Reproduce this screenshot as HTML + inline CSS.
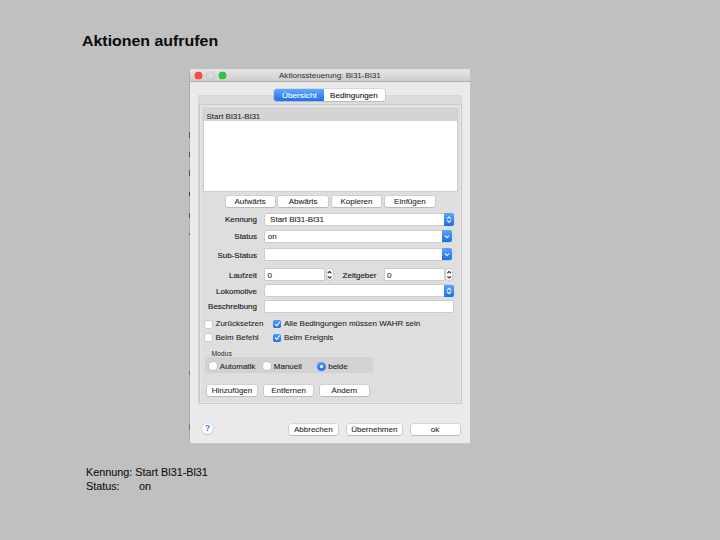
<!DOCTYPE html>
<html lang="de">
<head>
<meta charset="utf-8">
<title>Aktionen aufrufen</title>
<style>
html,body{margin:0;padding:0;}
body{width:720px;height:540px;background:#c0c0c0;overflow:hidden;position:relative;font-family:"Liberation Sans",sans-serif;color:#000;}
.abs{position:absolute;}
.t{position:absolute;white-space:nowrap;transform-origin:0 0;line-height:1;}
#title{left:82.2px;top:34.2px;font-weight:bold;font-size:14.6px;transform:scaleX(1.09);color:#0a0a0a;}
.cap{font-size:10.2px;transform:scaleX(1.06);color:#111;-webkit-text-stroke:0.1px currentColor;}
#win{left:190px;top:69px;width:280px;height:374.3px;background:#eaeaea;box-shadow:0 0.5px 0 0 #c9c9c9;border-radius:2px 2px 0 0;overflow:hidden;}
#tbar{left:0;top:0;width:100%;height:12.6px;background:linear-gradient(#e6e6e6,#cecece);border-bottom:0.7px solid #b0b0b0;box-sizing:border-box;}
.dot{position:absolute;width:7px;height:7px;border-radius:50%;top:3.2px;}
.d{font-size:8px;color:#1e1e1e;}
.lab{-webkit-text-stroke:0.16px currentColor;}
.d,.fld{-webkit-text-stroke:0.09px currentColor;}
.btn{-webkit-text-stroke:0.08px currentColor;}
.lab{position:absolute;white-space:nowrap;font-size:8px;line-height:1;color:#1e1e1e;text-align:right;width:80px;}
.btn{position:absolute;background:#fff;border-radius:2px;box-shadow:0 0 0 0.5px #c4c4c4,0 0.6px 0.6px 0.3px #b0b0b0;font-size:8px;line-height:11px;text-align:center;color:#1e1e1e;height:11px;}
.fld{position:absolute;background:#fff;box-shadow:0 0 0 0.5px #bababa;font-size:8px;line-height:12.4px;color:#1e1e1e;height:11.2px;white-space:nowrap;}
.cb{position:absolute;width:7px;height:7px;border-radius:1.5px;background:#fff;box-shadow:0 0 0 0.5px #b8b8b8;}
.cb.on{width:8px;height:8px;margin:-0.5px 0 0 -0.3px;background:linear-gradient(#4d9bf8,#1f73f0);box-shadow:none;border-radius:1.8px;}
.rd{position:absolute;width:7.6px;height:7.6px;border-radius:50%;background:#fff;box-shadow:0 0 0 0.5px #b4b4b4;}
.rd.on{background:linear-gradient(#4d9bf8,#1f73f0);box-shadow:0 0 0 0.5px #2a6fe0;}
.blue{position:absolute;background:linear-gradient(#5aa5fb,#1a6df0);border-radius:0 2px 2px 0;}
</style>
</head>
<body>
<div id="title" class="t">Aktionen aufrufen</div>

<div id="win" class="abs">
  <div id="tbar" class="abs"></div>
  <div class="dot" style="left:5.2px;background:#fc4a47;box-shadow:0 0 0 0.35px #e0352f;"></div>
  <div class="dot" style="left:16.9px;background:#dcdcdc;box-shadow:0 0 0 0.5px #bcbcbc;"></div>
  <div class="dot" style="left:28.8px;background:#2dc840;box-shadow:0 0 0 0.35px #22aa32;"></div>
  <div class="t d" style="left:89.4px;top:3px;color:#333;-webkit-text-stroke:0.05px;transform:scaleX(1.007)">Aktionssteuerung: Bl31-Bl31</div>
</div>

<!-- left edge artefacts -->
<div class="abs" style="left:189.2px;top:72px;width:0.7px;height:371px;background:#adadad;"></div>
<div class="abs" style="left:189.2px;top:132px;width:0.8px;height:6px;background:#555;"></div>
<div class="abs" style="left:189.2px;top:151.5px;width:0.8px;height:5.9px;background:#555;"></div>
<div class="abs" style="left:189.2px;top:169.7px;width:0.8px;height:5.9px;background:#555;"></div>
<div class="abs" style="left:189.2px;top:191.5px;width:0.8px;height:4.5px;background:#444;"></div>
<div class="abs" style="left:189.2px;top:213px;width:0.8px;height:5px;background:#555;"></div>
<div class="abs" style="left:189.2px;top:233px;width:0.8px;height:1.5px;background:#666;"></div>
<div class="abs" style="left:189.2px;top:371px;width:0.8px;height:4px;background:#777;"></div>
<div class="abs" style="left:189.2px;top:424px;width:0.8px;height:6px;background:#777;"></div>
<!-- tab pane -->
<div class="abs" style="left:198px;top:94.8px;width:264.4px;height:308.6px;background:#dcdcdc;border:0.5px solid #d6d6d6;box-sizing:border-box;"></div>
<div class="abs" style="left:199.2px;top:104.3px;width:262.6px;height:299.4px;background:#dedede;border:0.6px solid #cbcbcb;box-sizing:border-box;box-shadow:inset 0 0 0 0.8px #e7e7e7;"></div>

<!-- tabs -->
<div class="abs" style="left:274px;top:89px;width:111px;height:12.2px;background:#fff;border-radius:2.5px;box-shadow:0 0 0 0.5px #c6c6c6,0 0.6px 0.6px 0.3px #b0b0b0;"></div>
<div class="abs" style="left:274px;top:89px;width:50px;height:12.2px;background:linear-gradient(#5fa9fb,#1e70f1);border-radius:2.5px 0 0 2.5px;"></div>
<div class="t d" style="left:281.7px;top:91.6px;color:#fff;transform:scaleX(1.03)">Übersicht</div>
<div class="t d" style="left:330.3px;top:91.6px;color:#111;transform:scaleX(1.01)">Bedingungen</div>

<!-- list -->
<div class="abs" style="left:203.7px;top:108.8px;width:253px;height:82.3px;background:#fff;box-shadow:0 0 0 0.6px #c4c4c4;"></div>
<div class="abs" style="left:203.7px;top:108.8px;width:253px;height:11.9px;background:#d4d4d4;"></div>
<div class="t d" style="left:206.5px;top:112.6px;-webkit-text-stroke:0.06px">Start Bl31-Bl31</div>

<!-- list buttons -->
<div class="btn" style="left:225.6px;top:195.6px;width:49px;">Aufwärts</div>
<div class="btn" style="left:278.4px;top:195.6px;width:49.5px;">Abwärts</div>
<div class="btn" style="left:331.8px;top:195.6px;width:49.4px;">Kopieren</div>
<div class="btn" style="left:385.2px;top:195.6px;width:49.4px;">Einfügen</div>

<!-- form -->
<div class="lab" style="left:177px;top:216.2px;">Kennung</div>
<div class="fld" style="left:264.9px;top:213.95px;width:188.5px;border-radius:2px;"><span style="margin-left:5.2px">Start Bl31-Bl31</span></div>
<div class="blue" style="left:444px;top:213.4px;width:10.1px;height:12.2px;"></div>

<div class="lab" style="left:177px;top:233.4px;">Status</div>
<div class="fld" style="left:264.9px;top:230.7px;width:185px;"><span style="margin-left:2.8px">on</span></div>
<div class="blue" style="left:441.8px;top:230.1px;width:10.6px;height:12.2px;"></div>

<div class="lab" style="left:177px;top:251.6px;">Sub-Status</div>
<div class="fld" style="left:264.9px;top:248.6px;width:185px;"></div>
<div class="blue" style="left:441.8px;top:248.1px;width:10.6px;height:12.2px;"></div>

<div class="lab" style="left:177px;top:271.6px;">Laufzeit</div>
<div class="fld" style="left:265.4px;top:269.25px;width:58.8px;"><span style="margin-left:2.2px;position:relative;top:0.8px">0</span></div>
<div class="abs" style="left:326.5px;top:269.2px;width:6.2px;height:10.8px;margin:0.2px 0 0 0.1px;background:#fff;border-radius:3px;box-shadow:0 0 0 0.5px #b8b8b8;"></div>
<div class="lab" style="left:296.4px;top:271.6px;">Zeitgeber</div>
<div class="fld" style="left:384.8px;top:269.25px;width:58.8px;"><span style="margin-left:2.2px;position:relative;top:0.8px">0</span></div>
<div class="abs" style="left:446.1px;top:269.2px;width:6.2px;height:10.8px;margin:0.2px 0 0 0.1px;background:#fff;border-radius:3px;box-shadow:0 0 0 0.5px #b8b8b8;"></div>

<div class="lab" style="left:177px;top:287.6px;">Lokomotive</div>
<div class="fld" style="left:264.9px;top:285.1px;width:188.5px;border-radius:2px;"></div>
<div class="blue" style="left:444px;top:284.5px;width:10.1px;height:12.2px;"></div>

<div class="lab" style="left:177px;top:303px;">Beschreibung</div>
<div class="fld" style="left:264.9px;top:300.65px;width:188.5px;"></div>

<!-- checkboxes -->
<div class="cb" style="left:205.4px;top:320.5px;"></div>
<div class="t d" style="left:215.5px;top:320.4px;">Zurücksetzen</div>
<div class="cb on" style="left:273.3px;top:320.5px;"></div>
<div class="t d" style="left:284px;top:320.4px;">Alle Bedingungen müssen WAHR sein</div>
<div class="cb" style="left:205.4px;top:334.1px;"></div>
<div class="t d" style="left:215.5px;top:334px;">Beim Befehl</div>
<div class="cb on" style="left:273.3px;top:334.1px;"></div>
<div class="t d" style="left:284px;top:334px;">Beim Ereignis</div>

<!-- modus -->
<div class="t" style="left:211.4px;top:351px;font-size:6.8px;color:#2a2a2a;">Modus</div>
<div class="abs" style="left:205.3px;top:357.2px;width:167.5px;height:15.5px;background:#d2d2d2;border-radius:2px;"></div>
<div class="rd" style="left:209.1px;top:362.4px;"></div>
<div class="t d" style="left:219.8px;top:363px;">Automatik</div>
<div class="rd" style="left:263px;top:362.4px;"></div>
<div class="t d" style="left:273.8px;top:363px;">Manuell</div>
<div class="rd on" style="left:317.1px;top:362px;width:8.6px;height:8.6px;box-shadow:none;"></div>
<div class="abs" style="left:319.7px;top:364.6px;width:3.4px;height:3.4px;border-radius:50%;background:#fff;"></div>
<div class="t d" style="left:328.2px;top:363px;">beide</div>

<!-- action buttons -->
<div class="btn" style="left:207px;top:385.4px;width:50px;">Hinzufügen</div>
<div class="btn" style="left:264px;top:385.4px;width:49px;">Entfernen</div>
<div class="btn" style="left:320px;top:385.4px;width:48.8px;">Ändern</div>

<!-- bottom -->
<div class="abs" style="left:201.8px;top:422.7px;width:11.2px;height:11.2px;border-radius:50%;background:#fff;box-shadow:0 0 0 0.5px #c4c4c4,0 0.6px 0.6px 0.3px #b0b0b0;"></div>
<div class="t" style="left:204.9px;top:424.2px;font-size:8.5px;font-weight:bold;color:#3b82f0;">?</div>
<div class="btn" style="left:288.7px;top:424.1px;width:49.3px;">Abbrechen</div>
<div class="btn" style="left:346.5px;top:424.1px;width:55.6px;">Übernehmen</div>
<div class="btn" style="left:410.6px;top:424.1px;width:49px;">ok</div>

<svg class="abs" style="left:0;top:0;pointer-events:none" width="720" height="540" viewBox="0 0 720 540" fill="none" stroke-linecap="round" stroke-linejoin="round">
  <g stroke="#e3efff" stroke-width="1.25">
    <path d="M447.4 218.6 L449.1 216.9 L450.8 218.6"/>
    <path d="M447.4 220.6 L449.1 222.3 L450.8 220.6"/>
    <path d="M447.4 290 L449.1 288.3 L450.8 290"/>
    <path d="M447.4 292 L449.1 293.7 L450.8 292"/>
    <path d="M445.2 235.9 L447 237.7 L448.8 235.9"/>
    <path d="M445.2 253.8 L447 255.6 L448.8 253.8"/>
  </g>
  <g stroke="#fff" stroke-width="1.1">
    <path d="M275.3 324.2 L276.8 325.9 L279.4 322.2"/>
    <path d="M275.3 337.8 L276.8 339.5 L279.4 335.8"/>
  </g>
  <g stroke="#404040" stroke-width="1.35">
    <path d="M328.2 272.7 L329.6 271.5 L331 272.7"/>
    <path d="M328.2 276.7 L329.6 277.9 L331 276.7"/>
    <path d="M447.8 272.7 L449.2 271.5 L450.6 272.7"/>
    <path d="M447.8 276.7 L449.2 277.9 L450.6 276.7"/>
  </g>
</svg>
<!-- caption -->
<div class="t cap" style="left:86.2px;top:467.6px;">Kennung: Start Bl31-Bl31</div>
<div class="t cap" style="left:86.2px;top:482.4px;">Status:</div>
<div class="t cap" style="left:139.1px;top:482.4px;">on</div>
</body>
</html>
